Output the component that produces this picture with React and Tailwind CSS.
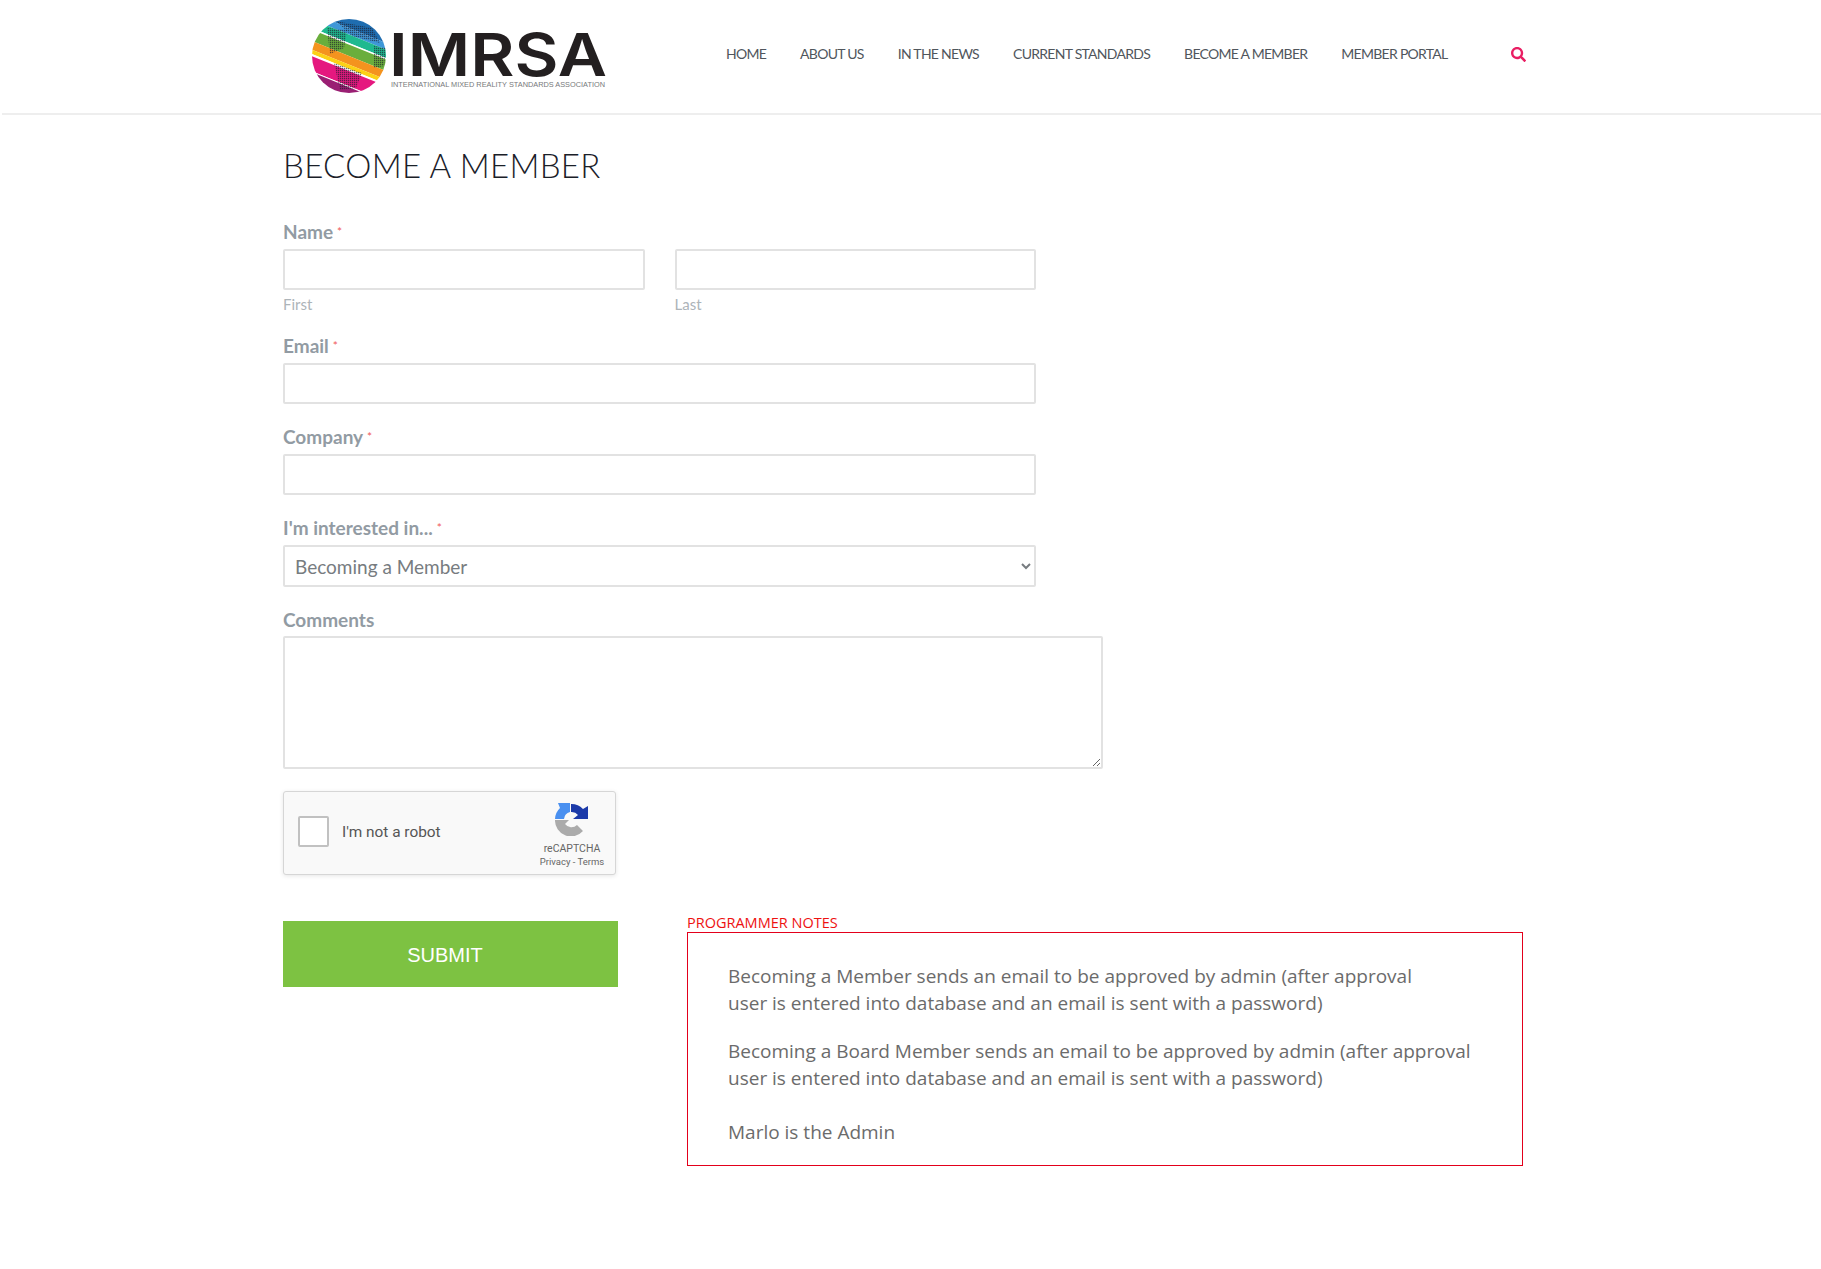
import { FaSearch } from 'react-icons/fa';

const NAV = ['HOME', 'ABOUT US', 'IN THE NEWS', 'CURRENT STANDARDS', 'BECOME A MEMBER', 'MEMBER PORTAL'];

// Stripes of the globe, top to bottom, before rotating
const BANDS = [
  { y: -30, h: 42, fill: '#1f6db0' },
  { y: 12, h: 6, fill: '#3f97d8' },
  { y: 18, h: 8, fill: '#1fb98f' },
  { y: 26, h: 1.5, fill: '#ffffff' },
  { y: 27.5, h: 10.5, fill: '#6aae3c' },
  { y: 38, h: 8, fill: '#f4931e' },
  { y: 46, h: 4, fill: '#fcd116' },
  { y: 50, h: 2, fill: '#ffffff' },
  { y: 52, h: 14, fill: '#e5187f' },
  { y: 66, h: 1, fill: '#ffffff' },
  { y: 67, h: 45, fill: '#9a1f73' },
];

function Logo() {
  return (
    <svg width="340" height="100" viewBox="0 0 340 100" className="block">
      <defs>
        <clipPath id="globe">
          <circle cx="37" cy="38" r="37" />
        </clipPath>
        <pattern id="dots" width="2" height="2" patternUnits="userSpaceOnUse">
          <rect width="1.3" height="1.3" fill="#1b1b2b" opacity="0.65" />
        </pattern>
      </defs>
      <g clipPath="url(#globe)">
        <g transform="rotate(22 37 38)">
          {BANDS.map((b) => (
            <rect key={b.y} x="-30" y={b.y} width="140" height={b.h} fill={b.fill} />
          ))}
        </g>
        <polygon points="24,3 60,10 68,25 40,18" fill="url(#dots)" />
        <polygon points="15,10 35,12 32,30 18,36" fill="url(#dots)" />
        <polygon points="62,28 74,30 72,48 62,50" fill="url(#dots)" />
        <polygon points="22,45 50,55 44,70 28,72" fill="url(#dots)" />
      </g>
      <text x="77" y="58" fontSize="59" fontWeight="600" fill="#231f20" textLength="218" lengthAdjust="spacingAndGlyphs" fontFamily="Inter, sans-serif">
        IMRSA
      </text>
      <text x="79" y="69" fontSize="7.5" fill="#77797b" textLength="214" lengthAdjust="spacingAndGlyphs" fontFamily="'Liberation Sans', sans-serif">
        INTERNATIONAL MIXED REALITY STANDARDS ASSOCIATION
      </text>
    </svg>
  );
}

function RecaptchaIcon() {
  return (
    <svg width="34" height="33" viewBox="0 0 34 33">
      <path d="M0 17H14L10 21A8 8 0 0 0 22 22L28 28A16 16 0 0 1 0 17Z" fill="#ababab" />
      <path d="M0 16A16 16 0 0 1 5 5L3 0H15V9A8 8 0 0 0 9 16Z" fill="#4a90f0" />
      <path d="M16 1A16 16 0 0 1 28 6L33 3V16H18L23 12A8 8 0 0 0 16 9Z" fill="#1c3aa9" />
    </svg>
  );
}

function Label({ text, required = true, className = 'mb-[5px]' }) {
  return (
    <label className={`block h-6 ${className} text-[19px] leading-6 font-bold text-[#929ba3] font-['Lato',sans-serif]`}>
      {text}
      {required && <span className="ml-1 text-[12px] align-top text-[#f05a5a] font-normal">*</span>}
    </label>
  );
}

const inputClass = 'block w-full h-[41px] bg-white border-2 border-[#e2e2e2] rounded-[2px] outline-none';

export default function App() {
  return (
    <div className="min-h-screen bg-white font-['Lato',sans-serif]">
      {/* Header */}
      <header className="h-[115px] ml-[2px] border-b-2 border-[#eeeeee] flex items-start">
        <div className="ml-[310px] mt-[18px] w-[414px] shrink-0">
          <Logo />
        </div>
        <nav className="mt-[44px] flex items-center gap-[34px] text-[14px] leading-5 tracking-[-0.72px] text-[#50565c]">
          {NAV.map((n) => (
            <a key={n}>{n}</a>
          ))}
        </nav>
        <FaSearch className="ml-[63px] mt-[47px] text-[#e91e63] text-[15px]" />
      </header>

      <main className="pl-[283px]">
        <h1 className="h-[105px] pt-[28px] text-[33px] leading-[44px] font-light text-[#1a2028] font-['Lato',sans-serif] tracking-[0.3px]">
          BECOME A MEMBER
        </h1>

        <div className="w-[753px]">
          <Label text="Name" />
          <div className="grid grid-cols-2 gap-[30px]">
            <div>
              <input className={inputClass} />
              <div className="mt-[4px] h-5 mb-5 text-[15px] leading-5 text-[#adb4b9]">First</div>
            </div>
            <div>
              <input className={inputClass} />
              <div className="mt-[4px] h-5 mb-5 text-[15px] leading-5 text-[#adb4b9]">Last</div>
            </div>
          </div>

          <Label text="Email" />
          <input className={`${inputClass} mb-[21px]`} />

          <Label text="Company" />
          <input className={`${inputClass} mb-[21px]`} />

          <Label text="I'm interested in..." />
          <select className="block w-full h-[42px] mb-[21px] pl-[6px] bg-white border-2 border-[#e2e2e2] rounded-[2px] outline-none text-[19px] text-[#777c80]">
            <option>Becoming a Member</option>
          </select>

          <Label text="Comments" required={false} className="mb-[4px]" />
        </div>
        <textarea className="block w-[820px] h-[133px] bg-white border-2 border-[#e2e2e2] rounded-[2px] outline-none" />

        {/* reCAPTCHA widget */}
        <div className="mt-[22px] w-[333px] h-[84px] bg-[#f9f9f9] border border-[#d6d6d6] rounded-[3px] shadow-[0_1px_4px_rgba(0,0,0,0.1)] flex items-start font-['Roboto',sans-serif]">
          <div className="ml-[14px] mt-[24px] w-[31px] h-[31px] bg-white border-2 border-[#c1c1c1] rounded-[2px]" />
          <div className="ml-[13px] mt-[30px] text-[15.4px] leading-5 text-[#555555]">I'm not a robot</div>
          <div className="ml-auto mr-[11px] mt-[11px] w-[64px] flex flex-col items-center text-[#666666]">
            <RecaptchaIcon />
            <div className="mt-[6px] text-[10.5px] leading-[13px]">reCAPTCHA</div>
            <div className="text-[9.5px] leading-[13px] whitespace-nowrap">Privacy - Terms</div>
          </div>
        </div>

        <div className="mt-[39px] flex items-start pb-10">
          <button className="mt-[7px] w-[335px] h-[66px] pr-[11px] pt-[2px] bg-[#7dc242] text-white text-[20px] font-['Liberation_Sans',sans-serif]">
            SUBMIT
          </button>
          <section className="ml-[69px] w-[836px]">
            <div className="h-[18px] mb-0 text-[14.5px] leading-[18px] text-[#ee1111] font-['Open_Sans',sans-serif]">PROGRAMMER NOTES</div>
            <div className="h-[234px] border border-[#e3001b] pl-[40px] pt-[30px] text-[19px] leading-[27px] text-[#6b6b6b] font-['Open_Sans',sans-serif]">
              <p>
                Becoming a Member sends an email to be approved by admin (after approval
                <br />
                user is entered into database and an email is sent with a password)
              </p>
              <p className="mt-[21px]">
                Becoming a Board Member sends an email to be approved by admin (after approval
                <br />
                user is entered into database and an email is sent with a password)
              </p>
              <p className="mt-[27px]">Marlo is the Admin</p>
            </div>
          </section>
        </div>
      </main>
    </div>
  );
}
